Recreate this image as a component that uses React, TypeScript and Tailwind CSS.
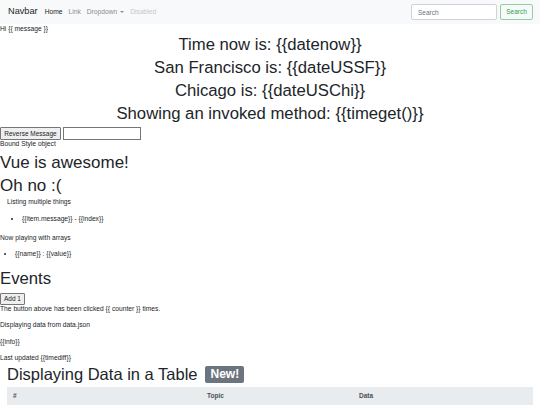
const font = { fontFamily: '"Liberation Sans", Arial, sans-serif' };

export default function App() {
  return (
    <div style={font} className="w-[540px] h-[405px] bg-white text-[#212529] overflow-hidden">
      <nav className="flex h-[24px] items-center bg-[#f8f9fa] pl-[8px] pr-[7px]">
        <span className="text-[9.2px] text-[#212529] mr-[7px]">Navbar</span>
        <div className="flex items-center gap-[6px] text-[6.7px]">
          <span className="text-[#212529]">Home</span>
          <span className="text-[#8a8d90]">Link</span>
          <span className="flex items-center gap-[3px] text-[#8a8d90]">
            Dropdown
            <span className="h-0 w-0 border-x-[2px] border-t-[2px] border-x-transparent border-t-[#8a8d90]" />
          </span>
          <span className="text-[#c6c8ca]">Disabled</span>
        </div>
        <div className="ml-auto flex items-center gap-[3px]">
          <input
            placeholder="Search"
            className="h-[16px] w-[86px] rounded-[2px] border border-[#ced4da] bg-white px-[6px] text-[6.5px] placeholder:text-[#6c757d] outline-none"
          />
          <button className="h-[16px] w-[33px] rounded-[2px] border border-[#8fd19e] text-[6.5px] text-[#28a745]">Search</button>
        </div>
      </nav>

      <div className="text-[6.7px] leading-[8px] mt-[1px]">Hi {"{{ message }}"}</div>

      <div className="text-center text-[16.7px] leading-[23px]">
        <div>Time now is: {"{{datenow}}"}</div>
        <div>San Francisco is: {"{{dateUSSF}}"}</div>
        <div>Chicago is: {"{{dateUSChi}}"}</div>
        <div>Showing an invoked method: {"{{timeget()}}"}</div>
      </div>

      <div className="flex items-center gap-[2px] mt-[2px]">
        <button className="h-[13px] w-[61px] border border-[#767676] bg-[#efefef] text-[6.5px] rounded-[1px]">Reverse Message</button>
        <input className="h-[13px] w-[78px] border border-[#767676] outline-none" />
      </div>
      <div className="text-[6.7px] leading-[8px]">Bound Style object</div>

      <div className="text-[17px] leading-[20px] mt-[5px]">Vue is awesome!</div>
      <div className="text-[17px] leading-[20px] mt-[3px]">Oh no :(</div>

      <div className="text-[6.7px] leading-[8px] ml-[7px] mt-[2px]">Listing multiple things</div>
      <ul className="list-disc pl-[22px] text-[6.7px] leading-[8px] mt-[9px]">
        <li>{"{{item.message}} - {{index}}"}</li>
      </ul>
      <div className="text-[6.7px] leading-[8px] mt-[11px]">Now playing with arrays</div>
      <ul className="list-disc pl-[15px] text-[6.7px] leading-[8px] mt-[8px]">
        <li>{"{{name}} : {{value}}"}</li>
      </ul>

      <div className="text-[16.7px] leading-[22px] mt-[10px]">Events</div>
      <button className="block mt-[3px] h-[12px] w-[25px] border border-[#767676] bg-[#efefef] text-[6.5px] rounded-[1px]">Add 1</button>
      <div className="text-[6.7px] leading-[8px]">The button above has been clicked {"{{ counter }}"} times.</div>
      <div className="text-[6.7px] leading-[8px] mt-[8px]">Displaying data from data.json</div>
      <div className="text-[6.7px] leading-[8px] mt-[9px]">{"{{info}}"}</div>
      <div className="text-[6.7px] leading-[8px] mt-[8px]">Last updated {"{{timediff}}"}</div>

      <div className="flex items-center gap-[8px] pl-[7px] mt-[1px]">
        <span className="text-[16.5px] leading-[22px]">Displaying Data in a Table</span>
        <span className="rounded-[2px] bg-[#6c757d] px-[5px] text-[12px] font-bold leading-[17px] text-white">New!</span>
      </div>
      <div className="mx-[7px] mt-[2px] flex h-[18px] items-center bg-[#e9ecef] text-[6.5px] font-bold text-[#495057]">
        <span className="w-[194px] pl-[6px]">#</span>
        <span className="w-[152px] pl-[6px]">Topic</span>
        <span className="pl-[6px]">Data</span>
      </div>
    </div>
  );
}
